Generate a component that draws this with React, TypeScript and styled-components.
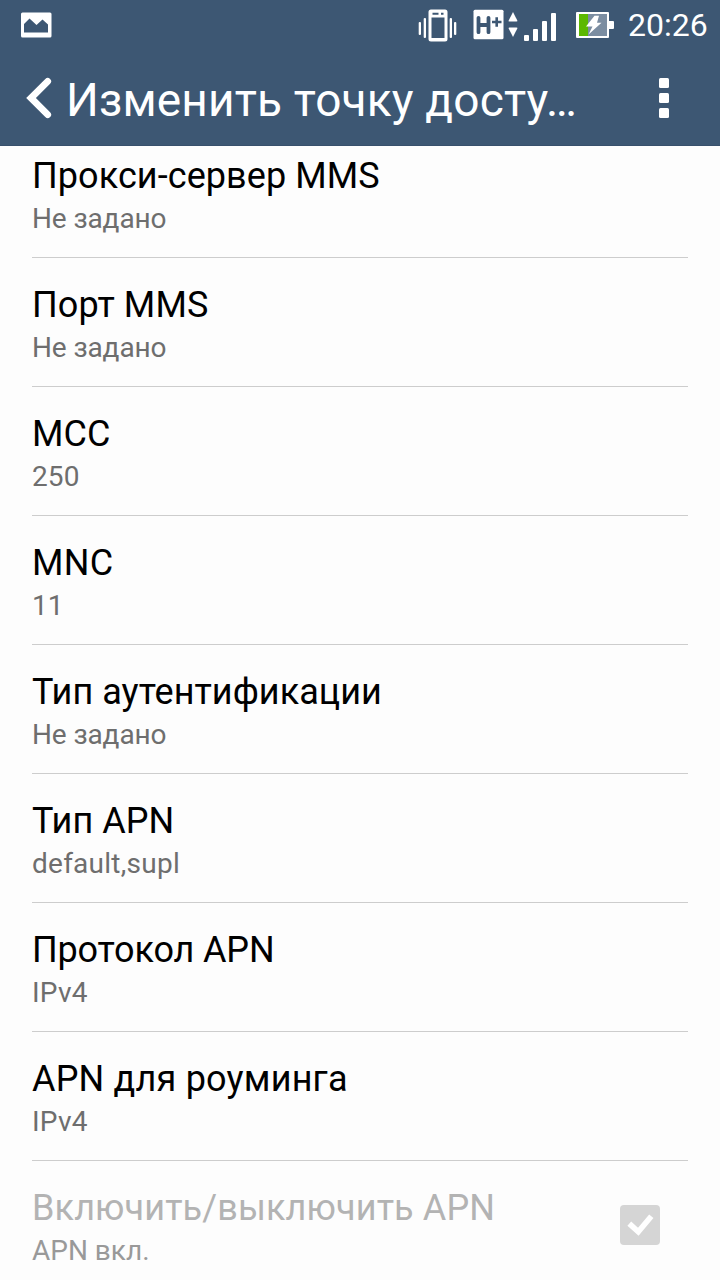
import React from 'react';
import styled, { createGlobalStyle } from 'styled-components';

const GlobalStyle = createGlobalStyle`
  * { box-sizing: border-box; }
  body { margin: 0; background: #fdfdfd; font-family: Roboto, "Noto Sans", sans-serif; }
`;

const Screen = styled.div`
  width: 720px;
  height: 1280px;
  display: flex;
  flex-direction: column;
  overflow: hidden;
  background: #fdfdfd;
`;

const StatusBar = styled.div`
  flex: none;
  height: 50px;
  display: flex;
  align-items: center;
  justify-content: space-between;
  padding: 0 12px 0 20px;
  background: #3d5773;
  color: #fff;
`;

const StatusIcons = styled.div`
  display: flex;
  align-items: center;
  svg { display: block; }
`;

const Clock = styled.span`
  width: 80px;
  margin-left: 14px;
  font-size: 32px;
  line-height: 50px;
  white-space: nowrap;
`;

const ActionBar = styled.header`
  flex: none;
  height: 96px;
  display: flex;
  align-items: center;
  padding: 0 50px 0 26px;
  background: #3d5773;
  border-bottom: 1px solid #38506c;
  color: #fff;
`;

const Title = styled.h1`
  flex: 1;
  margin: 5px 0 0 14px;
  font-size: 46px;
  font-weight: 400;
  line-height: 56px;
  letter-spacing: 0.17px;
  white-space: nowrap;
`;

const IconButton = styled.button`
  display: block;
  padding: 0;
  border: 0;
  background: none;
  color: inherit;
  svg { display: block; }
`;

const ListViewport = styled.main`
  flex: 1;
  min-height: 0;
  overflow: hidden;
  padding: 0 32px;
`;

const List = styled.ul`
  margin: -17px 0 0;
  padding: 0;
  list-style: none;
`;

const Row = styled.li`
  height: 129px;
  display: flex;
  align-items: flex-start;
  justify-content: space-between;
  padding-top: 26px;
  border-bottom: 1px solid #cdcdcd;
`;

const Label = styled.div<{ $disabled?: boolean; $tracking?: number }>`
  font-size: 36px;
  line-height: 42px;
  letter-spacing: ${p => p.$tracking ?? 0}px;
  color: ${p => (p.$disabled ? '#b3b3b3' : '#000')};
  white-space: nowrap;
`;

const Value = styled.div<{ $disabled?: boolean; $tracking?: number }>`
  margin-top: 5px;
  font-size: 28px;
  line-height: 33px;
  letter-spacing: ${p => p.$tracking ?? 0}px;
  color: ${p => (p.$disabled ? '#999' : '#6e6e6e')};
  white-space: nowrap;
`;

const Checkbox = styled.div`
  width: 40px;
  height: 40px;
  margin: 18px 28px 0 0;
  border-radius: 4px;
  background: #d5d5d5;
  svg { display: block; }
`;

interface Setting {
  label: string;
  value: string;
  labelTracking?: number;
  valueTracking?: number;
}

const settings: Setting[] = [
  { label: 'Прокси-сервер MMS', value: 'Не задано', labelTracking: 0.08, valueTracking: -0.12 },
  { label: 'Порт MMS', value: 'Не задано', labelTracking: 0.12, valueTracking: -0.12 },
  { label: 'MCC', value: '250', labelTracking: 0.1, valueTracking: 0.1 },
  { label: 'MNC', value: '11', labelTracking: 0.3 },
  { label: 'Тип аутентификации', value: 'Не задано', labelTracking: 0.04, valueTracking: -0.12 },
  { label: 'Тип APN', value: 'default,supl', labelTracking: 0.05, valueTracking: 0.25 },
  { label: 'Протокол APN', value: 'IPv4', labelTracking: -0.14, valueTracking: 0.25 },
  { label: 'APN для роуминга', value: 'IPv4', labelTracking: 0.2, valueTracking: 0.25 },
];

const PictureIcon = () => (
  <svg width="32" height="26" viewBox="0 0 32 26">
    <rect x="1" y="0.5" width="30.500" height="25" rx="1.500" fill="#fff" />
    <path d="M4 20.500V12l5.500-5.500L16.500 13l6-5.500L28 12.500v8z" fill="#3d5773" />
  </svg>
);

const SystemIcons = () => (
  <svg width="196" height="50" viewBox="418 0 196 50" fill="#fff">
    <rect x="418.700" y="22" width="2.300" height="13" rx="1" />
    <rect x="423.700" y="18" width="2.300" height="20" rx="1" />
    <path fillRule="evenodd" d="M431 9.500h14q2.500 0 2.500 2.500v27q0 2.500-2.500 2.500h-14q-2.500 0-2.500-2.500V12q0-2.500 2.500-2.500zM431.500 17.500v20.500h13v-20.500z" />
    <path d="M432.500 12.700h6v2h-6zM441 12.700h2.500v2H441z" fill="#3d5773" />
    <rect x="449.700" y="18" width="2.300" height="20" rx="1" />
    <rect x="454" y="22" width="2.300" height="13" rx="1" />
    <rect x="473.500" y="9.800" width="30" height="29.400" rx="1.500" />
    <path d="M478.500 17.800v14.400M488.500 17.800v14.400M478.500 25h10" stroke="#3d5773" strokeWidth="3.800" strokeLinecap="round" />
    <path d="M492 22h9.500M496.700 17.300v9.500" stroke="#3d5773" strokeWidth="2.600" />
    <path d="M513 12l4.300 8.500q.5 1-.8 1h-7q-1.300 0-.8-1z" />
    <path d="M513 37l4.300-8.500q.5-1-.8-1h-7q-1.300 0-.8 1z" />
    <rect x="524" y="35" width="5" height="6" rx="1" />
    <rect x="533" y="29" width="5" height="12" rx="1" />
    <rect x="542" y="21" width="5" height="20" rx="1" />
    <rect x="551" y="13" width="5" height="28" rx="1" />
    <path d="M577 12h31q1 0 1 1v8h4q1 0 1 1v6q0 1-1 1h-4v8q0 1-1 1h-31q-1 0-1-1V13q0-1 1-1z" />
    <rect x="579" y="14" width="28" height="22" fill="#7b8da1" />
    <rect x="579" y="14" width="9" height="22" fill="#5cb800" />
    <path d="M594.500 15.800l4.500 0-2 7 4.500 0L588.500 34.500l4-8H586z" />
  </svg>
);

const BackIcon = () => (
  <svg width="26" height="42" viewBox="0 0 26 42">
    <path d="M21.700 4.300L5 21l16.700 16.700" fill="none" stroke="#fff" strokeWidth="6.800" strokeLinecap="round" />
  </svg>
);

const MoreIcon = () => (
  <svg width="12" height="42" viewBox="0 0 12 42" fill="#fff">
    <rect x="1" y="1" width="10" height="10" rx="1.500" />
    <rect x="1" y="16" width="10" height="10" rx="1.500" />
    <rect x="1" y="31" width="10" height="10" rx="1.500" />
  </svg>
);

export default function App() {
  return (
    <>
      <GlobalStyle />
      <Screen>
        <StatusBar>
          <PictureIcon />
          <StatusIcons>
            <SystemIcons />
            <Clock>20:26</Clock>
          </StatusIcons>
        </StatusBar>
        <ActionBar>
          <IconButton><BackIcon /></IconButton>
          <Title>Изменить точку досту…</Title>
          <IconButton><MoreIcon /></IconButton>
        </ActionBar>
        <ListViewport>
          <List>
            {settings.map(s => (
              <Row key={s.label}>
                <div>
                  <Label $tracking={s.labelTracking}>{s.label}</Label>
                  <Value $tracking={s.valueTracking}>{s.value}</Value>
                </div>
              </Row>
            ))}
            <Row>
              <div>
                <Label $disabled $tracking={0.12}>Включить/выключить APN</Label>
                <Value $disabled>APN вкл.</Value>
              </div>
              <Checkbox>
                <svg width="40" height="40" viewBox="0 0 40 40">
                  <path d="M9.300 18.600l9 8.200L31.300 11.200" fill="none" stroke="#fff" strokeWidth="5.600" />
                </svg>
              </Checkbox>
            </Row>
          </List>
        </ListViewport>
      </Screen>
    </>
  );
}
